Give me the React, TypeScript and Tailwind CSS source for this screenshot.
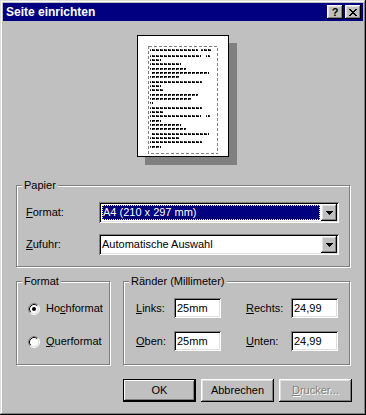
import React from "react";

const raised =
  "shadow-[inset_-1px_-1px_0_#000,inset_1px_1px_0_#fff,inset_-2px_-2px_0_#808080,inset_2px_2px_0_#dfdfdf]";
const sunken =
  "shadow-[inset_1px_1px_0_#808080,inset_-1px_-1px_0_#fff,inset_2px_2px_0_#000,inset_-2px_-2px_0_#dfdfdf]";
const groove = "relative border border-[#808080] shadow-[inset_1px_1px_0_#fff,1px_1px_0_#fff]";

// preview text lines: [start, width] per segment
const lines: [number, number][][] = [
  [[0, 48], [51, 11]],
  [[0, 51], [56, 4]],
  [[0, 11]],
  [[0, 31]],
  [[0, 36]],
  [[2, 57]],
  [[0, 29]],
  [[0, 52]],
  [[0, 11]],
  [[0, 14]],
  [[0, 48]],
  [[0, 42]],
  [[0, 3]],
  [[0, 52]],
  [[0, 14]],
  [[0, 51], [56, 4]],
  [[0, 11]],
  [[0, 31]],
  [[0, 36]],
  [[2, 57]],
  [[0, 29]],
  [[0, 52]],
  [[0, 11]],
];
const lineY = [3, 9, 13, 17, 22, 26, 30, 35, 39, 43, 48, 52, 56, 61, 65, 69, 74, 78, 82, 87, 91, 95, 100];

function Legend({ children }: { children: React.ReactNode }) {
  return (
    <span className="absolute -top-[7px] left-[5px] bg-[#c0c0c0] px-[2px] leading-[13px]">
      {children}
    </span>
  );
}

function DropArrow() {
  return (
    <div className={`flex h-full w-[16px] items-center justify-center bg-[#c0c0c0] ${raised}`}>
      <svg width="7" height="4" viewBox="0 0 7 4" shapeRendering="crispEdges">
        <path d="M0 0h7v1H0z M1 1h5v1H1z M2 2h3v1H2z M3 3h1v1H3z" fill="#000" />
      </svg>
    </div>
  );
}

function Radio({ checked }: { checked?: boolean }) {
  return (
    <svg width="12" height="12" viewBox="0 0 12 12">
      <circle cx="6" cy="6" r="5" fill="#fff" />
      <path d="M2.11 9.89 A5.5 5.5 0 0 1 9.89 2.11" stroke="#808080" fill="none" />
      <path d="M9.89 2.11 A5.5 5.5 0 0 1 2.11 9.89" stroke="#fff" fill="none" />
      <path d="M2.82 9.18 A4.5 4.5 0 0 1 9.18 2.82" stroke="#000" fill="none" />
      <path d="M9.18 2.82 A4.5 4.5 0 0 1 2.82 9.18" stroke="#dfdfdf" fill="none" />
      {checked && <circle cx="6" cy="6" r="2" fill="#000" />}
    </svg>
  );
}

function Field({ value }: { value: string }) {
  return (
    <div className={`flex h-[20px] w-[47px] items-center bg-white pl-[3px] ${sunken}`}>{value}</div>
  );
}

export default function App() {
  return (
    <div
      className={`flex h-[415px] w-[366px] flex-col bg-[#c0c0c0] p-[3px] font-['Liberation_Sans',Arial,sans-serif] text-[11px] leading-[13px] text-black shadow-[inset_-1px_-1px_0_#000,inset_1px_1px_0_#dfdfdf,inset_-2px_-2px_0_#808080,inset_2px_2px_0_#fff]`}
    >
      {/* title bar */}
      <div className="flex h-[18px] items-center bg-[#000080] pl-[3px] pr-[2px]">
        <span className="text-[12px] font-bold text-white">Seite einrichten</span>
        <div className="ml-auto flex gap-[2px]">
          <div className={`flex h-[14px] w-[16px] items-center justify-center bg-[#c0c0c0] text-[11px] font-bold leading-none ${raised}`}>
            ?
          </div>
          <div className={`flex h-[14px] w-[16px] items-center justify-center bg-[#c0c0c0] ${raised}`}>
            <svg width="8" height="7" viewBox="0 0 8 7" shapeRendering="crispEdges">
              <path
                d="M0 0h2v1H0z M6 0h2v1H6z M1 1h2v1H1z M5 1h2v1H5z M2 2h4v1H2z M3 3h2v1H3z M2 4h4v1H2z M1 5h2v1H1z M5 5h2v1H5z M0 6h2v1H0z M6 6h2v1H6z"
                fill="#000"
              />
            </svg>
          </div>
        </div>
      </div>

      {/* preview */}
      <div className="mt-[14px] flex justify-center">
        <div className="h-[122px] w-[92px] border border-black bg-white pl-[10px] pt-[10px] shadow-[8px_8px_0_#808080]">
          <svg width="70" height="108" viewBox="0 0 70 108" shapeRendering="crispEdges">
            <defs>
              <pattern id="txt" width="4" height="2" patternUnits="userSpaceOnUse">
                <rect x="0" y="0" width="3" height="1" fill="#000" />
                <rect x="0" y="1" width="1" height="1" fill="#000" />
                <rect x="1" y="1" width="2" height="1" fill="#606060" />
              </pattern>
            </defs>
            <rect x="0.5" y="0.5" width="69" height="107" fill="none" stroke="#808080" strokeDasharray="3 2" />
            {lines.map((segs, i) =>
              segs.map(([s, w], j) => (
                <rect key={`${i}-${j}`} x={2 + s} y={lineY[i]} width={w} height="2" fill="url(#txt)" />
              ))
            )}
          </svg>
        </div>
      </div>

      {/* Papier */}
      <div className={`${groove} ml-[13px] mt-[28px] h-[82px] w-[334px] pl-[9px] pt-[16px]`}>
        <Legend>Papier</Legend>
        <div className="flex h-[21px] items-center">
          <span className="w-[73px]">
            <u>F</u>ormat:
          </span>
          <div className={`flex h-[21px] w-[240px] bg-white p-[2px] ${sunken}`}>
            <div className="m-[1px] flex flex-1 items-center border border-dotted border-[#ffff80] bg-[#000080] text-white">
              A4 (210 x 297 mm)
            </div>
            <DropArrow />
          </div>
        </div>
        <div className="mt-[11px] flex h-[21px] items-center">
          <span className="w-[73px]">
            <u>Z</u>ufuhr:
          </span>
          <div className={`flex h-[21px] w-[240px] bg-white p-[2px] ${sunken}`}>
            <div className="flex flex-1 items-center pl-[1px]">Automatische Auswahl</div>
            <DropArrow />
          </div>
        </div>
      </div>

      {/* Format + Ränder */}
      <div className="ml-[13px] mt-[14px] flex gap-[13px]">
        <div className={`${groove} h-[84px] w-[94px] pl-[11px] pt-[20px]`}>
          <Legend>Format</Legend>
          <div className="flex h-[13px] items-center gap-[6px]">
            <Radio checked />
            <span>
              Ho<u>c</u>hformat
            </span>
          </div>
          <div className="mt-[20px] flex h-[13px] items-center gap-[6px]">
            <Radio />
            <span>
              <u>Q</u>uerformat
            </span>
          </div>
        </div>

        <div className={`${groove} h-[84px] w-[227px] pl-[12px] pt-[16px]`}>
          <Legend>Ränder (Millimeter)</Legend>
          <div className="grid grid-cols-[38px_47px_25px_45px_47px] items-center gap-y-[13px]">
            <span>
              <u>L</u>inks:
            </span>
            <Field value="25mm" />
            <span />
            <span>
              <u>R</u>echts:
            </span>
            <Field value="24,99" />
            <span>
              <u>O</u>ben:
            </span>
            <Field value="25mm" />
            <span />
            <span>
              <u>U</u>nten:
            </span>
            <Field value="24,99" />
          </div>
        </div>
      </div>

      {/* buttons */}
      <div className="mt-[14px] flex justify-end gap-[5px] pr-[11px]">
        <button
          className={`flex h-[23px] w-[73px] items-center justify-center border border-black bg-[#c0c0c0] shadow-[inset_-1px_-1px_0_#000,inset_1px_1px_0_#fff,inset_-2px_-2px_0_#808080]`}
        >
          OK
        </button>
        <button className={`flex h-[23px] w-[73px] items-center justify-center bg-[#c0c0c0] ${raised}`}>
          Abbrechen
        </button>
        <button
          className={`flex h-[23px] w-[73px] items-center justify-center bg-[#c0c0c0] text-[#808080] [text-shadow:1px_1px_0_#fff] ${raised}`}
        >
          <span>
            <u>D</u>rucker...
          </span>
        </button>
      </div>
    </div>
  );
}
